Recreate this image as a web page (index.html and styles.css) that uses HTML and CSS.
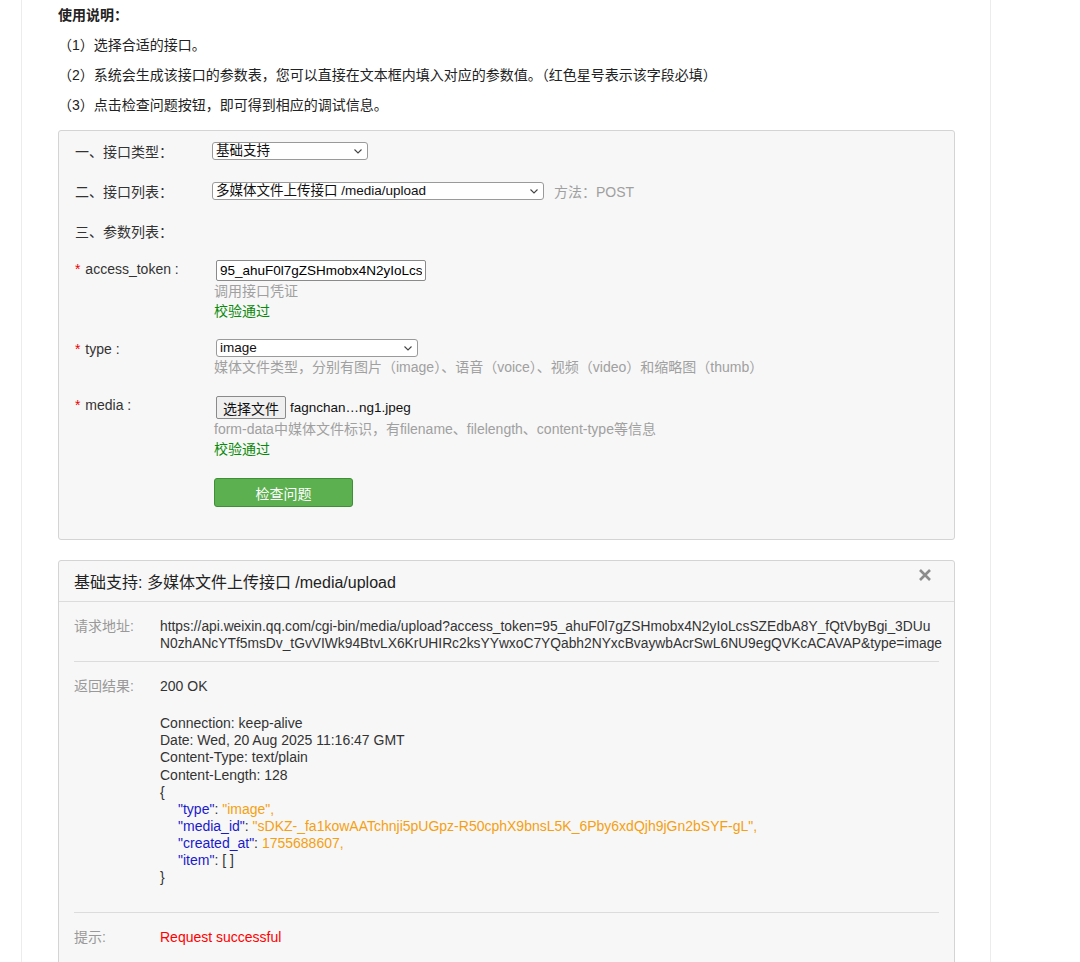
FILE: index.html
```html
<!DOCTYPE html>
<html lang="zh-CN">
<head>
  <meta charset="UTF-8" />
  <title>接口调试工具</title>
  <link rel="stylesheet" href="styles.css">
</head>
<body>
  <div class="page">
    <div class="guide">
      <p class="guide-title">使用说明：</p>
      <p>（1）选择合适的接口。</p>
      <p>（2）系统会生成该接口的参数表，您可以直接在文本框内填入对应的参数值。（红色星号表示该字段必填）</p>
      <p>（3）点击检查问题按钮，即可得到相应的调试信息。</p>
    </div>

    <div class="form-box">
      <div class="row">
        <span class="row-label">一、接口类型：</span>
        <div class="select-wrap sel-type">
          <select class="select"><option>基础支持</option></select>
          <svg class="chevron" viewBox="0 0 8 5"><path d="M0.5 0.5 4 4 7.5 0.5"/></svg>
        </div>
      </div>
      <div class="row">
        <span class="row-label">二、接口列表：</span>
        <div class="select-wrap sel-api">
          <select class="select"><option>多媒体文件上传接口 /media/upload</option></select>
          <svg class="chevron" viewBox="0 0 8 5"><path d="M0.5 0.5 4 4 7.5 0.5"/></svg>
        </div>
        <span class="method">方法：POST</span>
      </div>
      <div class="row row-last">
        <span class="row-label">三、参数列表：</span>
      </div>

      <div class="param">
        <span class="param-label"><i class="req">*</i> access_token :</span>
        <div class="param-field">
          <input class="text-input" type="text" value="95_ahuF0l7gZSHmobx4N2yIoLcsSZEdbA8Y_fQtVbyBgi_3DUu">
          <span class="hint">调用接口凭证</span>
          <span class="ok">校验通过</span>
        </div>
      </div>
      <div class="param">
        <span class="param-label"><i class="req">*</i> type :</span>
        <div class="param-field">
          <div class="select-wrap sel-media">
            <select class="select"><option>image</option></select>
            <svg class="chevron" viewBox="0 0 8 5"><path d="M0.5 0.5 4 4 7.5 0.5"/></svg>
          </div>
          <span class="hint">媒体文件类型，分别有图片（image）、语音（voice）、视频（video）和缩略图（thumb）</span>
        </div>
      </div>
      <div class="param">
        <span class="param-label"><i class="req">*</i> media :</span>
        <div class="param-field">
          <div class="file-pick">
            <button class="file-btn" type="button">选择文件</button>
            <span class="file-name">fagnchan…ng1.jpeg</span>
          </div>
          <span class="hint">form-data中媒体文件标识，有filename、filelength、content-type等信息</span>
          <span class="ok">校验通过</span>
        </div>
      </div>

      <div class="actions">
        <button class="btn-check" type="button">检查问题</button>
      </div>
    </div>

    <div class="result">
      <div class="result-head">
        <span class="result-title">基础支持: 多媒体文件上传接口 /media/upload</span>
        <svg class="close" viewBox="0 0 14 14"><path d="M2 2 12 12M12 2 2 12"/></svg>
      </div>
      <div class="result-body">
        <div class="res-row">
          <span class="res-label">请求地址:</span>
          <div class="res-value url">
            <span>https://api.weixin.qq.com/cgi-bin/media/upload?access_token=95_ahuF0l7gZSHmobx4N2yIoLcsSZEdbA8Y_fQtVbyBgi_3DUu</span>
            <span>N0zhANcYTf5msDv_tGvVIWk94BtvLX6KrUHIRc2ksYYwxoC7YQabh2NYxcBvaywbAcrSwL6NU9egQVKcACAVAP&amp;type=image</span>
          </div>
        </div>
        <div class="res-row res-row-tall">
          <span class="res-label">返回结果:</span>
          <div class="res-value">
            <div class="status">200 OK</div>
            <div>Connection: keep-alive</div>
            <div>Date: Wed, 20 Aug 2025 11:16:47 GMT</div>
            <div>Content-Type: text/plain</div>
            <div>Content-Length: 128</div>
            <div>{</div>
            <div class="json-line"><span class="key">"type"</span>: <span class="val">"image",</span></div>
            <div class="json-line"><span class="key">"media_id"</span>: <span class="val">"sDKZ-_fa1kowAATchnji5pUGpz-R50cphX9bnsL5K_6Pby6xdQjh9jGn2bSYF-gL",</span></div>
            <div class="json-line"><span class="key">"created_at"</span>: <span class="val">1755688607,</span></div>
            <div class="json-line"><span class="key">"item"</span>: [ ]</div>
            <div>}</div>
          </div>
        </div>
        <div class="res-row res-row-end">
          <span class="res-label">提示:</span>
          <div class="res-value tip">Request successful</div>
        </div>
      </div>
    </div>
  </div>
</body>
</html>
```

FILE: styles.css
```css
body {
  margin: 0;
  background: #fff;
  font-family: "Liberation Sans", "Noto Sans CJK SC", sans-serif;
  font-size: 14px;
  color: #333;
}

.page {
  width: 897px;
  min-height: 962px;
  margin-left: 21px;
  padding: 0 35px 0 36px;
  border-left: 1px solid #ececec;
  border-right: 1px solid #ececec;
}

/* 使用说明 */
.guide p {
  margin: 0;
  line-height: 30px;
  color: #222;
}

.guide-title {
  font-weight: bold;
}

/* 表单 */
.form-box {
  margin-top: 10px;
  padding: 10px 16px 32px;
  background: #f7f7f7;
  border: 1px solid #d4d4d4;
  border-radius: 3px;
}

.row {
  display: flex;
  align-items: center;
  height: 20px;
  margin-bottom: 20px;
  color: #333;
}

.row-last {
  margin-bottom: 18px;
}

.row-label {
  width: 137px;
}

.select-wrap {
  position: relative;
  height: 18px;
}

.select {
  appearance: none;
  -webkit-appearance: none;
  width: 100%;
  height: 18px;
  margin: 0;
  padding: 0 0 0 3px;
  border: 1px solid #9a9a9a;
  border-radius: 3px;
  background: #fff;
  font-family: "Liberation Sans", "Noto Sans CJK SC", sans-serif;
  font-size: 13.5px;
  line-height: 16px;
  color: #111;
}

.chevron {
  position: absolute;
  right: 6px;
  top: 7px;
  width: 8px;
  height: 5px;
  fill: none;
  stroke: #444;
  stroke-width: 1.1;
  pointer-events: none;
}

.sel-type {
  width: 156px;
}

.sel-api {
  width: 332px;
}

.sel-media {
  width: 202px;
  margin-left: 2px;
}

.method {
  margin-left: 10px;
  color: #a0a0a0;
}

.param {
  display: flex;
  margin-bottom: 18px;
}

.param-label {
  width: 139px;
  line-height: 20px;
  color: #333;
}

.req {
  font-style: normal;
  margin-right: 1px;
  color: #e00;
}

.param-field {
  display: flex;
  flex-direction: column;
  align-items: flex-start;
}

.text-input {
  box-sizing: border-box;
  width: 210px;
  height: 21px;
  margin: 1px 0 0 2px;
  padding: 0 3px;
  border: 1px solid #8a8a8a;
  border-radius: 2px;
  background: #fff;
  font-family: "Liberation Sans", sans-serif;
  font-size: 13.5px;
  color: #000;
}

.hint {
  line-height: 20px;
  color: #a0a0a0;
}

.ok {
  line-height: 20px;
  color: #0a8a0a;
}

.file-pick {
  display: flex;
  align-items: center;
  margin: 1px 0 0 2px;
  height: 23px;
}

.file-btn {
  height: 23px;
  padding: 0 6px;
  border: 1px solid #8a8a8a;
  border-radius: 2px;
  background: #efefef;
  font-family: "Liberation Sans", "Noto Sans CJK SC", sans-serif;
  font-size: 14px;
  color: #111;
}

.file-name {
  margin-left: 4px;
  font-size: 13.5px;
  color: #111;
}

.param:last-of-type {
  margin-bottom: 0;
}

.actions {
  padding-left: 139px;
  margin-top: 19px;
}

.btn-check {
  width: 139px;
  height: 29px;
  border: 1px solid #3f8f36;
  border-radius: 3px;
  background: #5cb04f;
  color: #fff;
  font-family: "Liberation Sans", "Noto Sans CJK SC", sans-serif;
  font-size: 14px;
}

/* 调试结果 */
.result {
  margin-top: 20px;
  background: #f7f7f7;
  border: 1px solid #d4d4d4;
  border-radius: 3px;
  padding-bottom: 30px;
}

.result-head {
  display: flex;
  justify-content: space-between;
  align-items: center;
  height: 40px;
  padding: 0 22px 0 15px;
  border-bottom: 1px solid #dcdcdc;
}

.result-title {
  font-size: 16px;
  color: #222;
}

.close {
  width: 14px;
  height: 14px;
  margin-top: -12px;
  stroke: #8c8c8c;
  stroke-width: 2.6;
}

.result-body {
  padding: 0 15px;
}

.res-row {
  display: flex;
  padding: 16px 0 9px;
  border-bottom: 1px solid #dcdcdc;
  line-height: 17.1px;
}

.res-row-tall {
  padding-bottom: 26px;
}

.res-row-end {
  border-bottom: none;
}

.res-label {
  flex: none;
  width: 86px;
  color: #999;
}

.res-value {
  flex: 1;
  min-width: 0;
  color: #333;
}

.url span {
  display: block;
  white-space: nowrap;
  font-size: 13.8px;
}

.status {
  margin-bottom: 20px;
}

.json-line {
  padding-left: 18px;
}

.key {
  color: #1a1acc;
}

.val {
  color: #f5a010;
}

.tip {
  color: #f00;
}
```
